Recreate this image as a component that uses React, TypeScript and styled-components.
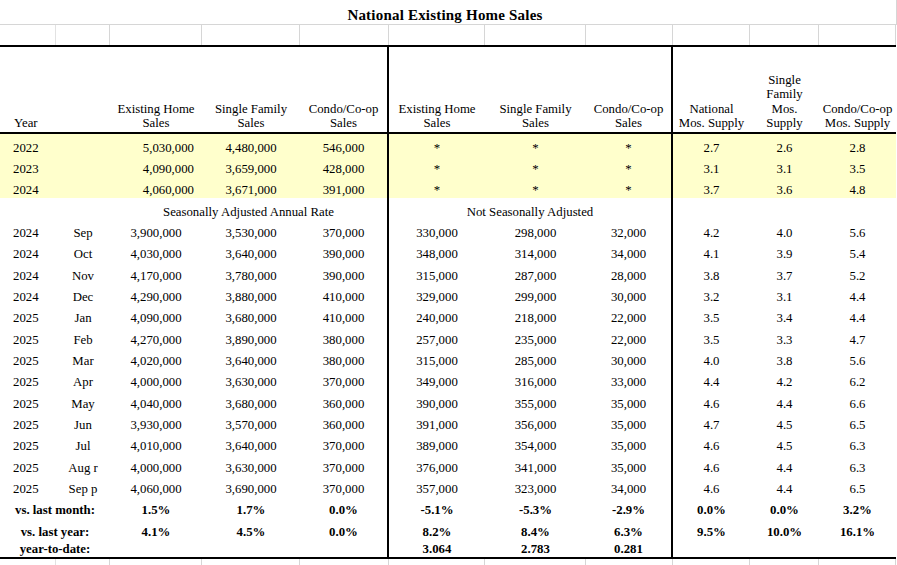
import styled, { createGlobalStyle } from 'styled-components';

type Align = 'left' | 'center' | 'right';

type CellSpec = {
  text?: string;
  span?: number;
  align?: Align;
};

const COLS = '56px 54px 92px 98px 89px 96px 101px 87px 77px 69px 77px';
const RULE_AFTER = [4, 7];
const ROW_H = 21.33;

const GlobalStyle = createGlobalStyle`
  html, body {
    margin: 0;
    padding: 0;
    background: #fff;
  }
  body {
    font-family: "Liberation Serif", "Times New Roman", serif;
    font-size: 12.8px;
    color: #000;
  }
`;

const Sheet = styled.div`
  width: 897px;
  overflow: hidden;
`;

const Title = styled.h1`
  margin: 0;
  height: 25px;
  box-sizing: border-box;
  display: flex;
  align-items: flex-end;
  justify-content: center;
  padding-right: 6px;
  border-bottom: 1px solid #d6d6d6;
  border-right: 1px solid #d6d6d6;
  width: 897px;
  font-size: 15px;
  line-height: 17px;
  font-weight: 700;
  letter-spacing: 0.2px;
`;

const Strip = styled.div<{ $height: number }>`
  display: grid;
  grid-template-columns: ${COLS};
  height: ${(p) => p.$height}px;
`;

const GridCell = styled.div`
  border-right: 1px solid #d6d6d6;
  &:first-child {
    border-right-color: #e2e2e2;
  }
`;

const Frame = styled.div`
  width: 896px;
  border-top: 2px solid #000;
  border-bottom: 2px solid #000;
`;

const Row = styled.div<{ $height: number; $tone?: 'yellow' }>`
  display: grid;
  grid-template-columns: ${COLS};
  height: ${(p) => p.$height}px;
  background: ${(p) => (p.$tone === 'yellow' ? '#ffffcc' : 'transparent')};
`;

const HeaderRow = styled(Row)`
  border-bottom: 2px solid #000;
`;

const Cell = styled.div<{ $align: Align; $rule: boolean; $span: number; $bold?: boolean }>`
  grid-column: span ${(p) => p.$span};
  box-sizing: border-box;
  display: flex;
  align-items: flex-end;
  justify-content: ${(p) =>
    p.$align === 'left' ? 'flex-start' : p.$align === 'right' ? 'flex-end' : 'center'};
  padding-left: ${(p) => (p.$align === 'left' ? '13px' : '0')};
  padding-right: ${(p) => (p.$align === 'right' ? '8px' : '0')};
  border-right: ${(p) => (p.$rule ? '2px solid #000' : 'none')};
  font-weight: ${(p) => (p.$bold ? 700 : 400)};
  line-height: 14.6px;
  white-space: nowrap;
`;

const HeadText = styled.span<{ $left?: boolean }>`
  display: block;
  text-align: ${(p) => (p.$left ? 'left' : 'center')};
  padding-left: ${(p) => (p.$left ? '1px' : '0')};
  padding-bottom: 1px;
  white-space: pre-line;
`;

const headers = [
  'Year',
  '',
  'Existing Home\nSales',
  'Single Family\nSales',
  'Condo/Co-op\nSales',
  'Existing Home\nSales',
  'Single Family\nSales',
  'Condo/Co-op\nSales',
  'National\nMos. Supply',
  'Single\nFamily\nMos.\nSupply',
  'Condo/Co-op\nMos. Supply',
];

const annual = [
  ['2022', '5,030,000', '4,480,000', '546,000', '2.7', '2.6', '2.8'],
  ['2023', '4,090,000', '3,659,000', '428,000', '3.1', '3.1', '3.5'],
  ['2024', '4,060,000', '3,671,000', '391,000', '3.7', '3.6', '4.8'],
];

const monthly = [
  ['2024', 'Sep', '3,900,000', '3,530,000', '370,000', '330,000', '298,000', '32,000', '4.2', '4.0', '5.6'],
  ['2024', 'Oct', '4,030,000', '3,640,000', '390,000', '348,000', '314,000', '34,000', '4.1', '3.9', '5.4'],
  ['2024', 'Nov', '4,170,000', '3,780,000', '390,000', '315,000', '287,000', '28,000', '3.8', '3.7', '5.2'],
  ['2024', 'Dec', '4,290,000', '3,880,000', '410,000', '329,000', '299,000', '30,000', '3.2', '3.1', '4.4'],
  ['2025', 'Jan', '4,090,000', '3,680,000', '410,000', '240,000', '218,000', '22,000', '3.5', '3.4', '4.4'],
  ['2025', 'Feb', '4,270,000', '3,890,000', '380,000', '257,000', '235,000', '22,000', '3.5', '3.3', '4.7'],
  ['2025', 'Mar', '4,020,000', '3,640,000', '380,000', '315,000', '285,000', '30,000', '4.0', '3.8', '5.6'],
  ['2025', 'Apr', '4,000,000', '3,630,000', '370,000', '349,000', '316,000', '33,000', '4.4', '4.2', '6.2'],
  ['2025', 'May', '4,040,000', '3,680,000', '360,000', '390,000', '355,000', '35,000', '4.6', '4.4', '6.6'],
  ['2025', 'Jun', '3,930,000', '3,570,000', '360,000', '391,000', '356,000', '35,000', '4.7', '4.5', '6.5'],
  ['2025', 'Jul', '4,010,000', '3,640,000', '370,000', '389,000', '354,000', '35,000', '4.6', '4.5', '6.3'],
  ['2025', 'Aug r', '4,000,000', '3,630,000', '370,000', '376,000', '341,000', '35,000', '4.6', '4.4', '6.3'],
  ['2025', 'Sep p', '4,060,000', '3,690,000', '370,000', '357,000', '323,000', '34,000', '4.6', '4.4', '6.5'],
];

const changes = [
  ['vs. last month:', '1.5%', '1.7%', '0.0%', '-5.1%', '-5.3%', '-2.9%', '0.0%', '0.0%', '3.2%'],
  ['vs. last year:', '4.1%', '4.5%', '0.0%', '8.2%', '8.4%', '6.3%', '9.5%', '10.0%', '16.1%'],
  ['year-to-date:', '', '', '', '3.064', '2.783', '0.281', '', '', ''],
];

function Cells({ specs, bold }: { specs: CellSpec[]; bold?: boolean }) {
  let col = 0;
  return (
    <>
      {specs.map((s, i) => {
        const span = s.span ?? 1;
        col += span;
        const rule = RULE_AFTER.includes(col - 1);
        return (
          <Cell key={i} $align={s.align ?? 'center'} $rule={rule} $span={span} $bold={bold}>
            {s.text}
          </Cell>
        );
      })}
    </>
  );
}

function GridStrip({ height }: { height: number }) {
  return (
    <Strip $height={height}>
      {headers.map((_, i) => (
        <GridCell key={i} />
      ))}
    </Strip>
  );
}

export default function App() {
  return (
    <Sheet>
      <GlobalStyle />
      <Title>National Existing Home Sales</Title>
      <GridStrip height={20} />
      <Frame>
        <HeaderRow $height={85}>
          {headers.map((h, i) => (
            <Cell key={i} $align={i === 0 ? 'left' : 'center'} $rule={RULE_AFTER.includes(i)} $span={1}>
              <HeadText $left={i === 0}>{h}</HeadText>
            </Cell>
          ))}
        </HeaderRow>

        {annual.map(([year, total, single, condo, n, s, c]) => (
          <Row key={year} $height={ROW_H} $tone="yellow">
            <Cells
              specs={[
                { text: year, align: 'left' },
                {},
                { text: total, align: 'right' },
                { text: single },
                { text: condo },
                { text: '*' },
                { text: '*' },
                { text: '*' },
                { text: n },
                { text: s },
                { text: c },
              ]}
            />
          </Row>
        ))}

        <Row $height={ROW_H}>
          <Cells
            specs={[
              {},
              {},
              { text: 'Seasonally Adjusted Annual Rate', span: 3 },
              { text: 'Not Seasonally Adjusted', span: 3 },
              {},
              {},
              {},
            ]}
          />
        </Row>

        {monthly.map((r) => (
          <Row key={r[0] + r[1]} $height={ROW_H}>
            <Cells specs={r.map((t, i) => ({ text: t, align: i === 0 ? 'left' : 'center' }))} />
          </Row>
        ))}

        {changes.map(([label, ...vals], i) => (
          <Row key={label} $height={i === 2 ? 17.7 : ROW_H}>
            <Cells bold specs={[{ text: label, span: 2 }, ...vals.map((t) => ({ text: t }))]} />
          </Row>
        ))}
      </Frame>
      <GridStrip height={10} />
    </Sheet>
  );
}
